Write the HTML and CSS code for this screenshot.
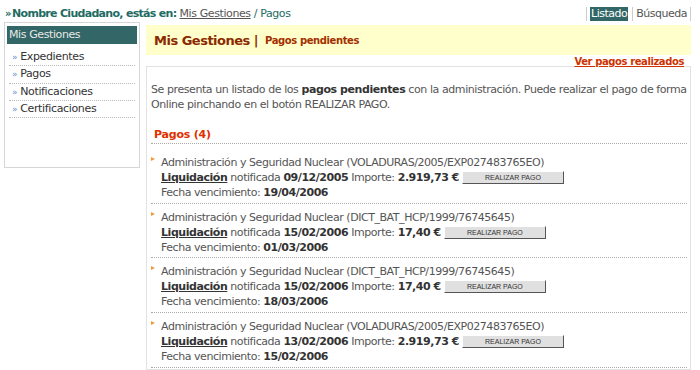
FILE: index.html
```html
<!DOCTYPE html>
<html lang="es">

<head>
    <meta charset="UTF-8">
    <title>Mis Gestiones - Pagos</title>
    <link rel="stylesheet" href="styles.css">
</head>

<body>
    <div class="top">
        <div class="crumbs">
            <span class="raquo">»</span><b>Nombre Ciudadano, estás en:</b>
            <a href="#" class="crumb-link">Mis Gestiones</a> / Pagos
        </div>
        <div class="views">
            <a href="#" class="view active">Listado</a><a href="#" class="view">Búsqueda</a>
        </div>
    </div>

    <div class="layout">
        <div class="sidebar">
            <div class="side-title">Mis Gestiones</div>
            <ul class="side-menu">
                <li><span class="mark">»</span>Expedientes</li>
                <li><span class="mark">»</span>Pagos</li>
                <li><span class="mark">»</span>Notificaciones</li>
                <li><span class="mark">»</span>Certificaciones</li>
            </ul>
        </div>

        <div class="main">
            <div class="banner">
                <span class="banner-title">Mis Gestiones |</span>
                <span class="banner-sub">Pagos pendientes</span>
            </div>
            <div class="more"><a href="#">Ver pagos realizados</a></div>

            <div class="content">
                <p class="intro">Se presenta un listado de los <b>pagos pendientes</b> con la administración. Puede realizar el pago de forma Online pinchando en el botón REALIZAR PAGO.</p>

                <h3 class="count">Pagos (4)</h3>

                <ul class="payments">
                    <li>
                        <div>Administración y Seguridad Nuclear (VOLADURAS/2005/EXP027483765EO)</div>
                        <div><a href="#" class="doc">Liquidación</a> notificada <b>09/12/2005</b> Importe: <b>2.919,73 €</b> <button class="pay">REALIZAR PAGO</button></div>
                        <div>Fecha vencimiento: <b>19/04/2006</b></div>
                    </li>
                    <li>
                        <div>Administración y Seguridad Nuclear (DICT_BAT_HCP/1999/76745645)</div>
                        <div><a href="#" class="doc">Liquidación</a> notificada <b>15/02/2006</b> Importe: <b>17,40 €</b> <button class="pay">REALIZAR PAGO</button></div>
                        <div>Fecha vencimiento: <b>01/03/2006</b></div>
                    </li>
                    <li>
                        <div>Administración y Seguridad Nuclear (DICT_BAT_HCP/1999/76745645)</div>
                        <div><a href="#" class="doc">Liquidación</a> notificada <b>15/02/2006</b> Importe: <b>17,40 €</b> <button class="pay">REALIZAR PAGO</button></div>
                        <div>Fecha vencimiento: <b>18/03/2006</b></div>
                    </li>
                    <li>
                        <div>Administración y Seguridad Nuclear (VOLADURAS/2005/EXP027483765EO)</div>
                        <div><a href="#" class="doc">Liquidación</a> notificada <b>13/02/2006</b> Importe: <b>2.919,73 €</b> <button class="pay">REALIZAR PAGO</button></div>
                        <div>Fecha vencimiento: <b>15/02/2006</b></div>
                    </li>
                </ul>
            </div>
        </div>
    </div>
</body>

</html>
```

FILE: styles.css
```css
* {
    padding: 0;
    margin: 0;
    box-sizing: border-box;
}

body {
    font-family: "DejaVu Sans", Verdana, sans-serif;
    font-size: 11px;
    letter-spacing: -0.45px;
    color: #555;
    background-color: #fff;
}

a {
    color: inherit;
}

/* top bar */
.top {
    display: flex;
    justify-content: space-between;
    align-items: center;
    height: 22px;
    padding: 5px 9px 0 5px;
}

.crumbs {
    font-size: 11px;
    letter-spacing: -0.4px;
    color: #226b62;
}

.crumbs b {
    letter-spacing: -0.7px;
}

.crumbs .raquo {
    font-size: 10px;
    font-weight: bold;
    margin-right: 1px;
}

.crumb-link {
    color: #555;
}

.views {
    display: flex;
    border-right: 1px solid #ccc;
}

.view {
    display: block;
    font-size: 11px;
    letter-spacing: -0.5px;
    line-height: 14px;
    padding: 0 1px 0 1px;
    margin: 0 2px 0 0;
    color: #555;
    text-decoration: none;
}

.view.active {
    background-color: #336666;
    color: #fff;
    margin-left: 3px;
    box-shadow: -3px 0 0 #fff, -4px 0 0 #ccc;
}

.view + .view {
    padding-left: 3px;
    margin-left: 2px;
    border-left: 1px solid #ccc;
}

/* columns */
.layout {
    display: flex;
    align-items: flex-start;
    padding-left: 4px;
}

.sidebar {
    width: 136px;
    height: 146px;
    border: 1px solid #d6d6d6;
    padding: 3px 2px;
}

.side-title {
    background-color: #336666;
    color: #e8e8e8;
    font-size: 11px;
    letter-spacing: -0.4px;
    line-height: 18px;
    padding-left: 2px;
}

.side-menu {
    list-style: none;
    padding: 5px 2px 0 2px;
}

.side-menu li {
    font-size: 11px;
    letter-spacing: -0.35px;
    color: #333;
    height: 17.3px;
    line-height: 16px;
    border-bottom: 1px dotted #bbb;
    padding-left: 3px;
}

.side-menu .mark {
    color: #6b8fd0;
    font-size: 9px;
    line-height: 1;
    margin-right: 3px;
}

.main {
    width: 545px;
    margin-left: 6px;
    margin-top: 3px;
}

.banner {
    background-color: #ffffcc;
    height: 30px;
    padding-left: 8px;
    display: flex;
    align-items: center;
    color: #8b2a00;
    font-weight: bold;
}

.banner-title {
    font-size: 13px;
    letter-spacing: -0.5px;
    margin-right: 7px;
}

.banner-sub {
    font-size: 10px;
    letter-spacing: -0.4px;
    color: #a33000;
}

.more {
    text-align: right;
    padding-right: 7px;
    height: 11px;
    line-height: 13px;
}

.more a {
    color: #cc3300;
    font-size: 10px;
    letter-spacing: -0.4px;
    font-weight: bold;
}

.content {
    border: 1px solid #e2e2e2;
    height: 304px;
    padding: 15px 3px 0 4px;
}

.intro {
    line-height: 15px;
    letter-spacing: -0.42px;
}

.intro b {
    color: #333;
}

.count {
    color: #e03000;
    font-size: 11px;
    letter-spacing: -0.2px;
    line-height: 15px;
    margin-top: 15px;
    padding-left: 3px;
    border-bottom: 1px dotted #aaa;
    padding-bottom: 1px;
}

.payments {
    list-style: none;
    padding-top: 5px;
}

.payments li {
    position: relative;
    padding: 6px 0 2.7px 10px;
    line-height: 15px;
    border-bottom: 1px dotted #aaa;
}

.payments li::before {
    content: "";
    position: absolute;
    left: 0;
    top: 8px;
    border-left: 4px solid #f29a3a;
    border-top: 2.5px solid transparent;
    border-bottom: 2.5px solid transparent;
}

.payments b {
    color: #333;
}

.doc {
    color: #333;
    font-weight: bold;
}

.pay {
    font-family: "Liberation Sans", Arial, sans-serif;
    font-size: 7px;
    letter-spacing: 0;
    color: #333;
    width: 102px;
    height: 13px;
    background-color: #e0e0e0;
    border: 1px solid;
    border-color: #fff #555 #555 #fff;
    vertical-align: 1px;
}
```
